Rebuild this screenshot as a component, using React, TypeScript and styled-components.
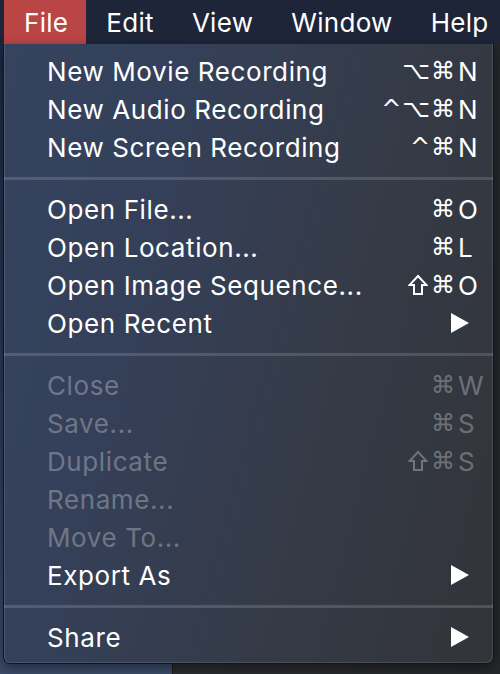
import styled, { createGlobalStyle } from "styled-components";

const GlobalStyle = createGlobalStyle`
  html, body {
    margin: 0;
    padding: 0;
    background: #26282c;
  }
  body {
    font-family: "Inter", "DejaVu Sans", sans-serif;
    -webkit-font-smoothing: antialiased;
  }
`;

interface MenuEntry {
  label: string;
  mods?: string;
  shift?: boolean;
  keyChar?: string;
  disabled?: boolean;
  submenu?: boolean;
}

const groups: MenuEntry[][] = [
  [
    { label: "New Movie Recording", mods: "⌥⌘", keyChar: "N" },
    { label: "New Audio Recording", mods: "^⌥⌘", keyChar: "N" },
    { label: "New Screen Recording", mods: "^⌘", keyChar: "N" },
  ],
  [
    { label: "Open File...", mods: "⌘", keyChar: "O" },
    { label: "Open Location...", mods: "⌘", keyChar: "L" },
    { label: "Open Image Sequence...", shift: true, mods: "⌘", keyChar: "O" },
    { label: "Open Recent", submenu: true },
  ],
  [
    { label: "Close", mods: "⌘", keyChar: "W", disabled: true },
    { label: "Save...", mods: "⌘", keyChar: "S", disabled: true },
    { label: "Duplicate", shift: true, mods: "⌘", keyChar: "S", disabled: true },
    { label: "Rename...", disabled: true },
    { label: "Move To...", disabled: true },
    { label: "Export As", submenu: true },
  ],
  [{ label: "Share", submenu: true }],
];

const topItems = ["File", "Edit", "View", "Window", "Help"];

const Screen = styled.div`
  width: 500px;
  height: 674px;
  overflow: hidden;
  display: flex;
  flex-direction: column;
`;

const MenuBar = styled.div`
  height: 44px;
  flex-shrink: 0;
  display: flex;
  align-items: stretch;
  padding-left: 4px;
  background: #1e2538;
`;

const BarItem = styled.div<{ $active?: boolean }>`
  display: flex;
  align-items: center;
  padding: 0 18px 0 20px;
  font-size: 26px;
  letter-spacing: 0.3px;
  white-space: nowrap;
  color: #ffffff;
  background: ${({ $active }) => ($active ? "#b94545" : "transparent")};
`;

const Desktop = styled.div`
  position: relative;
  flex: 1;
  display: grid;
  grid-template-columns: 172px 1fr;
`;

const Wallpaper = styled.div`
  background: linear-gradient(180deg, #1b2843 0%, #2c3b58 60%, #3a4a68 100%);
`;

const AppWindow = styled.div`
  background: linear-gradient(90deg, #2a2c31 0%, #25272b 100%);
  border-left: 1px solid #1a1b1e;
`;

const Dropdown = styled.div`
  position: absolute;
  top: 0;
  left: 3px;
  width: 491px;
  padding: 8px 0 7px;
  box-sizing: border-box;
  border: 1px solid #121418;
  border-top: none;
  border-radius: 0 0 7px 7px;
  background: linear-gradient(
    105deg,
    #34435f 0%,
    #344059 30%,
    #353a46 65%,
    #323439 100%
  );
  box-shadow: inset 1px 0 0 rgba(255, 255, 255, 0.12),
    inset -1px -1px 0 rgba(255, 255, 255, 0.12),
    0 4px 12px rgba(0, 0, 0, 0.4);
`;

const Item = styled.div<{ $disabled?: boolean }>`
  height: 38px;
  display: flex;
  align-items: center;
  padding-left: 43px;
  font-size: 26px;
  letter-spacing: 0.6px;
  color: ${({ $disabled }) =>
    $disabled ? "rgba(255, 255, 255, 0.3)" : "#ffffff"};
`;

const Label = styled.span`
  flex: 1;
  white-space: nowrap;
`;

const Mods = styled.span`
  display: flex;
  align-items: center;
  font-family: "DejaVu Sans", sans-serif;
  font-size: 24px;
  letter-spacing: 1px;
`;

const ShiftIcon = styled.svg`
  width: 20px;
  height: 22px;
  margin-right: 3px;
  fill: none;
  stroke: currentColor;
  stroke-width: 2;
  stroke-linejoin: miter;
`;

const KeyChar = styled.span`
  width: 37px;
  padding-left: 2px;
  box-sizing: border-box;
`;

const Arrow = styled.svg`
  width: 18px;
  height: 20px;
  margin-right: 24px;
  fill: #ffffff;
`;

const Separator = styled.div`
  height: 24px;
  display: flex;
  align-items: center;

  &::before {
    content: "";
    display: block;
    width: 100%;
    height: 3px;
    background: rgba(255, 255, 255, 0.15);
  }
`;

const MenuRow = ({ entry }: { entry: MenuEntry }) => (
  <Item $disabled={entry.disabled}>
    <Label>{entry.label}</Label>
    {(entry.mods || entry.shift) && (
      <Mods>
        {entry.shift && (
          <ShiftIcon viewBox="0 0 20 22">
            <path d="M10 2 L18.5 11 L14 11 L14 20 L6 20 L6 11 L1.5 11 Z" />
          </ShiftIcon>
        )}
        {entry.mods}
      </Mods>
    )}
    {entry.keyChar && <KeyChar>{entry.keyChar}</KeyChar>}
    {entry.submenu && (
      <Arrow viewBox="0 0 18 20">
        <polygon points="0,0 18,10 0,20" />
      </Arrow>
    )}
  </Item>
);

export default function App() {
  return (
    <>
      <GlobalStyle />
      <Screen>
        <MenuBar>
          {topItems.map((name, i) => (
            <BarItem key={name} $active={i === 0}>
              {name}
            </BarItem>
          ))}
        </MenuBar>
        <Desktop>
          <Wallpaper />
          <AppWindow />
          <Dropdown>
            {groups.map((group, gi) => (
              <div key={gi}>
                {gi > 0 && <Separator />}
                {group.map((entry) => (
                  <MenuRow key={entry.label} entry={entry} />
                ))}
              </div>
            ))}
          </Dropdown>
        </Desktop>
      </Screen>
    </>
  );
}
